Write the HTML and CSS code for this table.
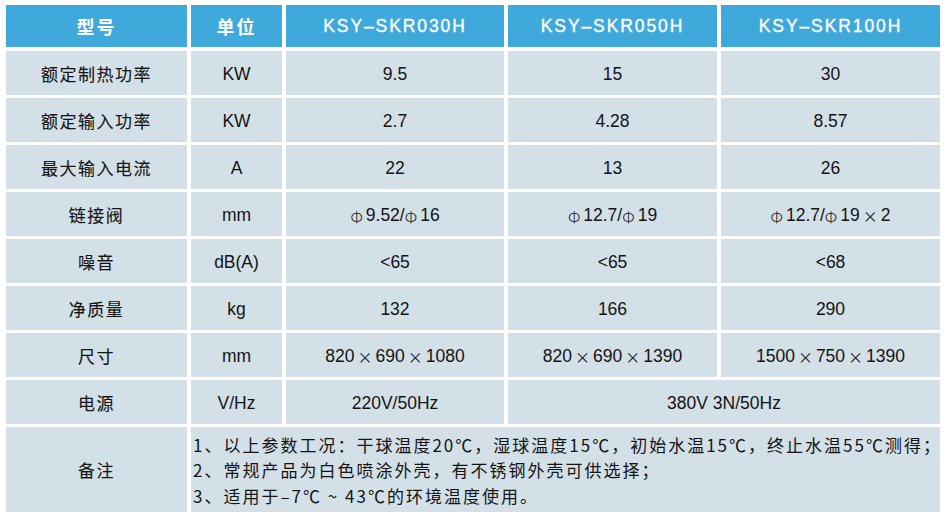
FILE: index.html
```html
<!DOCTYPE html>
<html lang="zh-CN">
<head>
<meta charset="utf-8">
<title>KSY-SKR 参数表</title>
<link rel="stylesheet" href="styles.css">
</head>
<body>
<div class="spec">
  <div class="cell head cn">型号</div>
  <div class="cell head cn">单位</div>
  <div class="cell head model">KSY–SKR030H</div>
  <div class="cell head model">KSY–SKR050H</div>
  <div class="cell head model">KSY–SKR100H</div>

  <div class="cell cn">额定制热功率</div>
  <div class="cell">KW</div>
  <div class="cell">9.5</div>
  <div class="cell">15</div>
  <div class="cell">30</div>

  <div class="cell cn">额定输入功率</div>
  <div class="cell">KW</div>
  <div class="cell">2.7</div>
  <div class="cell">4.28</div>
  <div class="cell">8.57</div>

  <div class="cell cn">最大输入电流</div>
  <div class="cell">A</div>
  <div class="cell">22</div>
  <div class="cell">13</div>
  <div class="cell">26</div>

  <div class="cell cn">链接阀</div>
  <div class="cell">mm</div>
  <div class="cell"><span class="phi">Φ</span>9.52/<span class="phi">Φ</span>16</div>
  <div class="cell"><span class="phi">Φ</span>12.7/<span class="phi">Φ</span>19</div>
  <div class="cell"><span class="phi">Φ</span>12.7/<span class="phi">Φ</span>19<span class="x">×</span>2</div>

  <div class="cell cn">噪音</div>
  <div class="cell">dB(A)</div>
  <div class="cell">&lt;65</div>
  <div class="cell">&lt;65</div>
  <div class="cell">&lt;68</div>

  <div class="cell cn">净质量</div>
  <div class="cell">kg</div>
  <div class="cell">132</div>
  <div class="cell">166</div>
  <div class="cell">290</div>

  <div class="cell cn">尺寸</div>
  <div class="cell">mm</div>
  <div class="cell">820<span class="x">×</span>690<span class="x">×</span>1080</div>
  <div class="cell">820<span class="x">×</span>690<span class="x">×</span>1390</div>
  <div class="cell">1500<span class="x">×</span>750<span class="x">×</span>1390</div>

  <div class="cell cn">电源</div>
  <div class="cell">V/Hz</div>
  <div class="cell">220V/50Hz</div>
  <div class="cell span2">380V 3N/50Hz</div>

  <div class="cell cn">备注</div>
  <div class="cell notes">
    <div class="line">1、以上参数工况：干球温度20℃，湿球温度15℃，初始水温15℃，终止水温55℃测得；</div>
    <div class="line">2、常规产品为白色喷涂外壳，有不锈钢外壳可供选择；</div>
    <div class="line">3、适用于–7℃ ~ 43℃的环境温度使用。</div>
  </div>
</div>
</body>
</html>
```

FILE: styles.css
```css
html, body {
  margin: 0;
  padding: 0;
  background: #ffffff;
}

body {
  font-family: "Liberation Sans", "Noto Sans CJK SC", sans-serif;
  color: #141414;
}

.spec {
  display: grid;
  grid-template-columns: 181px 91px 218px 209px 219px;
  grid-template-rows: 43px repeat(8, 44px) 85px;
  column-gap: 4px;
  row-gap: 3px;
  margin: 5px 0 0 6px;
}

.cell {
  background: #d3e0e8;
  display: flex;
  align-items: center;
  justify-content: center;
  font-size: 17.5px;
  white-space: nowrap;
  padding-top: 3px;
}

.head {
  background: #40a9db;
  color: #ffffff;
  margin-bottom: 1px;
  padding-top: 1px;
}

.head.model {
  font-size: 17.5px;
  letter-spacing: 1.9px;
  -webkit-text-stroke: 0.35px #ffffff;
}

.cn {
  font-family: "Noto Sans CJK SC", "Liberation Sans", sans-serif;
  font-size: 17px;
  font-weight: normal;
  letter-spacing: 1.5px;
  padding-top: 0;
  -webkit-text-stroke: 0.12px #141414;
}

.head.cn {
  font-weight: bold;
  font-size: 18px;
  letter-spacing: 2px;
  padding-top: 0;
  -webkit-text-stroke: 0;
}

.phi {
  font-family: "Noto Sans CJK SC", sans-serif;
  font-size: 16px;
  font-weight: 300;
  color: #222;
  margin-right: 3px;
}

.x {
  font-family: "Noto Sans CJK SC", sans-serif;
  font-size: 15px;
  margin: 0 3px;
}

.span2 {
  grid-column: span 2;
}

.notes {
  grid-column: span 4;
  flex-direction: column;
  align-items: flex-start;
  justify-content: center;
  padding-left: 2px;
  padding-top: 1px;
  font-family: "Noto Sans CJK SC", "Liberation Sans", sans-serif;
  font-size: 17px;
  letter-spacing: 2px;
}

.line {
  line-height: 25.5px;
}
```
